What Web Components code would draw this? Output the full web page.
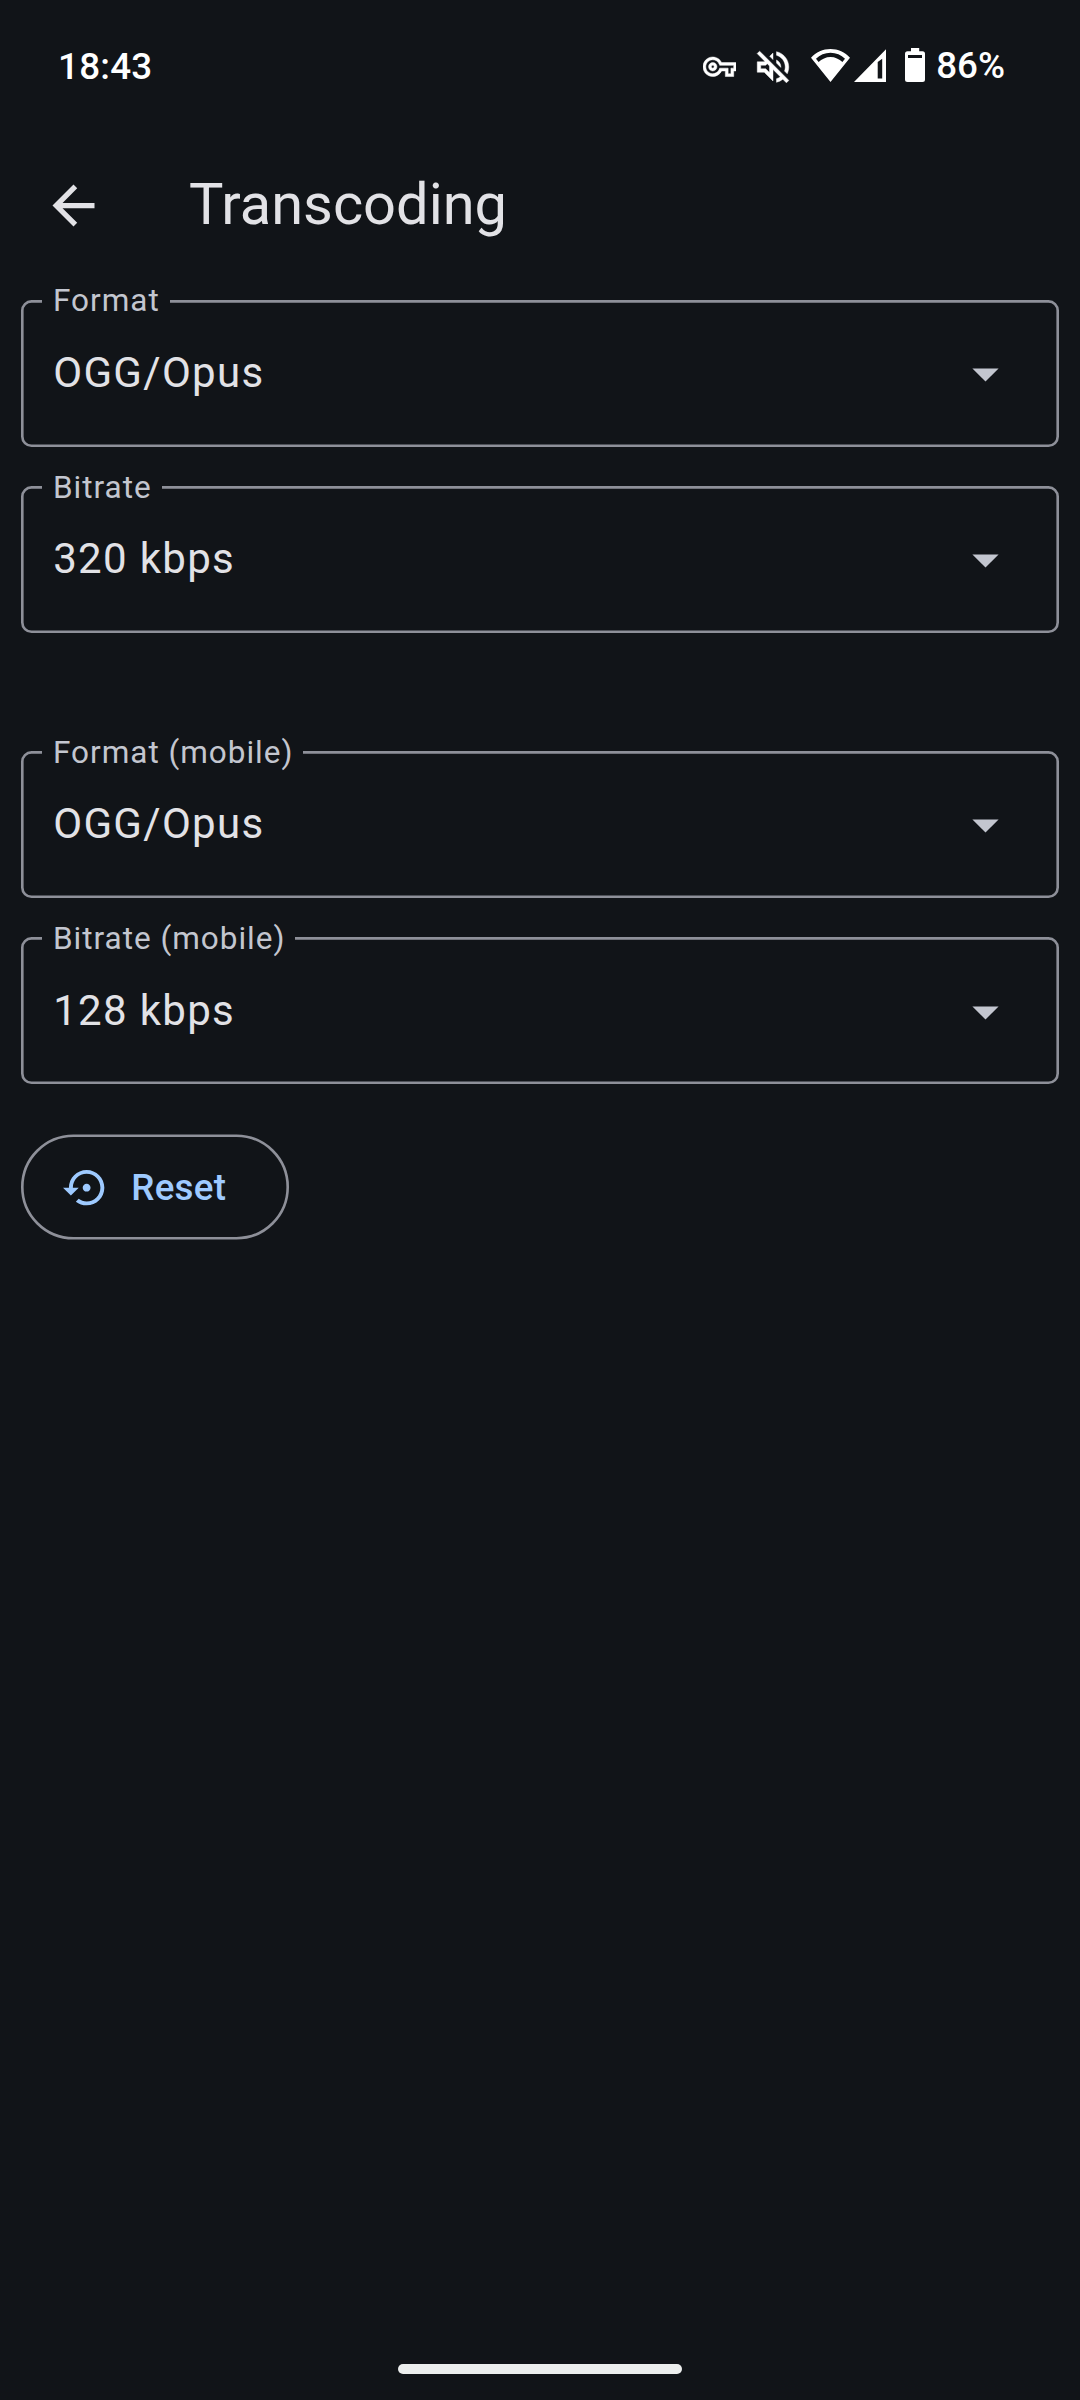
<!DOCTYPE html>
<html lang="en">
<head>
<meta charset="utf-8">
<title>Transcoding</title>
<style>
  html, body { margin: 0; background: #111418; }
  body { font-family: Roboto, "Noto Sans", sans-serif; color: #e2e2e6; }
</style>
</head>
<body>
<settings-screen>
  <status-bar slot="status" time="18:43" battery="86%"></status-bar>
  <app-bar slot="bar">Transcoding</app-bar>
  <field-group>
    <select-field label="Format">OGG/Opus</select-field>
    <select-field label="Bitrate">320 kbps</select-field>
  </field-group>
  <field-group>
    <select-field label="Format (mobile)">OGG/Opus</select-field>
    <select-field label="Bitrate (mobile)">128 kbps</select-field>
  </field-group>
  <reset-button>Reset</reset-button>
</settings-screen>

<script>
const define = (name, html, setup) => {
  const template = document.createElement('template');
  template.innerHTML = html;
  customElements.define(name, class extends HTMLElement {
    constructor() {
      super();
      this.attachShadow({ mode: 'open' }).append(template.content.cloneNode(true));
    }
    connectedCallback() { if (setup) setup(this, this.shadowRoot); }
  });
};

define('settings-screen', `
<style>
  :host { display: flex; flex-direction: column; height: 2400px; background: #111418; }
  main { flex: 1; display: flex; flex-direction: column; align-items: stretch; gap: 117.9px; padding: 21px 21px 0; }
  ::slotted(reset-button) { align-self: flex-start; margin-top: -68.2px; }
  footer { display: flex; justify-content: center; padding-bottom: 26px; }
  .handle { width: 284px; height: 10px; border-radius: 5px; background: #eceeed; }
</style>
<slot name="status"></slot>
<slot name="bar"></slot>
<main><slot></slot></main>
<footer><div class="handle"></div></footer>`);

define('field-group', `
<style>:host { display: flex; flex-direction: column; gap: 39.3px; }</style>
<slot></slot>`);

define('status-bar', `
<style>
  :host { display: flex; align-items: center; justify-content: space-between; height: 132px; box-sizing: border-box;
    padding: 0 75px 0 58px; color: #fff; font-weight: 500; font-size: 36.75px; line-height: 44px; }
  .icons { display: flex; align-items: center; }
  svg { display: block; fill: currentColor; }
  .time { margin-top: 2px; letter-spacing: .25px; }
  .key { margin: 2px 15.5px 0 0; stroke: currentColor; stroke-width: .35; }
  .mute { margin: 2px 17.5px 0 0; stroke: currentColor; stroke-width: .25; }
  .wifi { margin: -1px 4px 0 0; }
  .signal { margin: -1px 19px 0 0; }
  .battery { margin: -2px 11.1px 0 0; }
  .level { margin-top: -1px; }
</style>
<span class="time"></span>
<div class="icons">
  <svg class="key" width="33.5" height="33.5" viewBox="0 0 24 24"><path d="M22 19h-6v-4h-2.68c-1.14 2.42-3.6 4-6.32 4-3.86 0-7-3.14-7-7s3.14-7 7-7c2.72 0 5.17 1.58 6.32 4H24v6h-2v4zm-4-2h2v-4h2v-2H11.94l-.23-.67C11.01 8.34 9.11 7 7 7c-2.76 0-5 2.24-5 5s2.24 5 5 5c2.11 0 4.01-1.34 4.71-3.33l.23-.67H18v4zM7 15c-1.65 0-3-1.35-3-3s1.35-3 3-3 3 1.35 3 3-1.35 3-3 3zm0-4c-.55 0-1 .45-1 1s.45 1 1 1 1-.45 1-1-.45-1-1-1z"/></svg>
  <svg class="mute" width="42" height="42" viewBox="0 0 24 24"><path d="M4.34 2.93L2.93 4.34 7.29 8.7 7 9H3v6h4l5 5v-6.59l4.18 4.18c-.65.49-1.38.88-2.18 1.11v2.06c1.34-.3 2.57-.92 3.61-1.75l2.05 2.05 1.41-1.41L4.34 2.93zM10 15.17L7.83 13H5v-2h2.83l.88-.88L10 11.41v3.76zM19 12c0 .82-.15 1.61-.41 2.34l1.53 1.53c.56-1.17.88-2.48.88-3.87 0-4.28-2.99-7.86-7-8.77v2.06c2.89.86 5 3.54 5 6.71zm-7-8l-1.88 1.88L12 7.76zm4.5 8c0-1.77-1.02-3.29-2.5-4.03v1.79l2.48 2.48c.01-.08.02-.16.02-.24z"/></svg>
  <svg class="wifi" width="39" height="33" viewBox="0 0 39 33"><path fill-rule="evenodd" d="M19.5 33L0 8.700C5 3 12 0 19.500 0S34 3 39 8.700zM5 9.800l2.600 3.300C10.700 10 15 8 19.500 8s8.800 2 11.900 5.100l2.600-3.300C30.200 5.900 25 3.700 19.500 3.700S8.800 5.900 5 9.800z"/></svg>
  <svg class="signal" width="32" height="33" viewBox="0 0 32 33"><path fill-rule="evenodd" d="M0 33L32 .3V33zM23.700 13v16.600h4.500V9.800z"/></svg>
  <svg class="battery" width="20" height="34" viewBox="0 0 20 34"><path fill-rule="evenodd" d="M6 0h8.200v3.300h3.300a2.500 2.500 0 0 1 2.500 2.500v25.700a2.500 2.500 0 0 1-2.500 2.500h-15a2.500 2.500 0 0 1-2.500-2.500v-25.700a2.500 2.500 0 0 1 2.500-2.500h3.500zM3 7v3h14v-3z"/></svg>
  <span class="level"></span>
</div>`, (host, root) => {
  root.querySelector('.time').textContent = host.getAttribute('time');
  root.querySelector('.level').textContent = host.getAttribute('battery');
});

define('app-bar', `
<style>
  :host { display: flex; align-items: center; height: 147px; box-sizing: border-box; padding-left: 42px; gap: 84px;
    font-size: 57.75px; line-height: 73px; color: #e2e2e6; }
  svg { display: block; width: 63px; height: 63px; fill: currentColor; }
  h1 { margin: -2px 0 0; font: inherit; }
</style>
<svg viewBox="0 0 24 24"><path d="M20 11H7.83l5.59-5.590L12 4l-8 8 8 8 1.410-1.410L7.830 13H20v-2z"/></svg>
<h1><slot></slot></h1>`);

define('select-field', `
<style>
  :host { display: grid; grid-template: 147px / 100%; }
  .outline, .body, .label { grid-area: 1 / 1; }
  .outline { width: 100%; height: 147px; display: block; overflow: visible; }
  rect { fill: none; stroke: #8e9099; stroke-width: 2.625px; x: 1.3px; y: 1.4px; rx: 9.2px;
    width: calc(100% - 2.6px); height: 144.4px; }
  .label { justify-self: start; align-self: start; margin: -16.6px 0 0 21px; padding: 0 10px 0 11px; background: #111418;
    font-size: 31.500px; line-height: 36px; letter-spacing: .98px; color: #c3c6cf; }
  .body { display: flex; align-items: center; justify-content: space-between; padding: 0 60px 1.7px 32.200px;
    font-size: 42px; line-height: 63px; letter-spacing: 1.3125px; color: #e2e2e6; }
  .arrow { width: 27px; height: 14px; fill: #c3c6cf; margin-top: 5px; }
</style>
<svg class="outline"><rect/></svg>
<span class="label"></span>
<div class="body"><span><slot></slot></span>
  <svg class="arrow" viewBox="0 0 27 14"><path d="M.4.4h26.200L13.500 13.500z"/></svg>
</div>`, (host, root) => {
  root.querySelector('.label').textContent = host.getAttribute('label');
});

define('reset-button', `
<style>
  :host { display: grid; grid-template: 105px / 268px; }
  .outline, .body { grid-area: 1 / 1; }
  .outline { width: 100%; height: 105px; display: block; overflow: visible; }
  rect { fill: none; stroke: #8e9099; stroke-width: 2.625px; x: 1.3px; y: 1.8px; rx: 51.200px;
    width: calc(100% - 2.600px); height: 102.400px; }
  .body { display: flex; align-items: center; gap: 21px; padding: 1px 0 0 42px;
    color: #9ecaff; font-size: 36.750px; font-weight: 500; letter-spacing: .2625px; line-height: 52px; }
  .icon { width: 47.250px; height: 47.250px; fill: currentColor; }
  .text { margin-top: 1.600px; }
</style>
<svg class="outline"><rect/></svg>
<div class="body">
  <svg class="icon" viewBox="0 0 24 24"><path d="M14 12c0-1.100-.9-2-2-2s-2 .9-2 2 .9 2 2 2 2-.9 2-2zm-2-9c-4.970 0-9 4.030-9 9H0l4 4 4-4H5c0-3.870 3.130-7 7-7s7 3.130 7 7-3.130 7-7 7c-1.510 0-2.910-.49-4.060-1.300l-1.420 1.440C8.040 20.300 9.940 21 12 21c4.970 0 9-4.030 9-9s-4.030-9-9-9z"/></svg>
  <span class="text"><slot></slot></span>
</div>`);
</script>
</body>
</html>
